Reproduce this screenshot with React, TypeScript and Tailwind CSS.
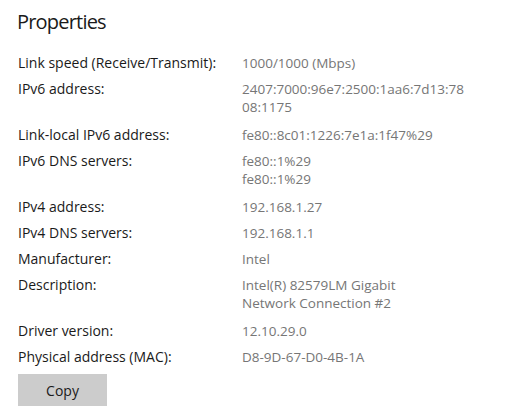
const rows: { label: string; value: string[] }[] = [
  { label: "Link speed (Receive/Transmit):", value: ["1000/1000 (Mbps)"] },
  { label: "IPv6 address:", value: ["2407:7000:96e7:2500:1aa6:7d13:78", "08:1175"] },
  { label: "Link-local IPv6 address:", value: ["fe80::8c01:1226:7e1a:1f47%29"] },
  { label: "IPv6 DNS servers:", value: ["fe80::1%29", "fe80::1%29"] },
  { label: "IPv4 address:", value: ["192.168.1.27"] },
  { label: "IPv4 DNS servers:", value: ["192.168.1.1"] },
  { label: "Manufacturer:", value: ["Intel"] },
  { label: "Description:", value: ["Intel(R) 82579LM Gigabit", "Network Connection #2"] },
  { label: "Driver version:", value: ["12.10.29.0"] },
  { label: "Physical address (MAC):", value: ["D8-9D-67-D0-4B-1A"] },
];

export default function App() {
  return (
    <div className="w-[512px] h-[418px] bg-white px-[18px] pt-[8px] font-['Open_Sans',sans-serif] overflow-hidden">
      <h1 className="text-[20px] leading-[28px] tracking-[-0.8px] text-[#1a1a1a] -ml-[1px]">
        Properties
      </h1>

      <div className="mt-[18px] flex flex-col gap-[8px]">
        {rows.map((row) => (
          <div
            key={row.label}
            className={`flex leading-[18px] ${row.value.length > 1 ? "pb-[2px]" : ""}`}
          >
            <div className="w-[224px] shrink-0 text-[14px] text-[#1a1a1a]">{row.label}</div>
            <div className="text-[13.5px] text-[#767676]">
              {row.value.map((v) => (
                <div key={v + row.label}>{v}</div>
              ))}
            </div>
          </div>
        ))}
      </div>

      <button className="mt-[8px] w-[89px] h-[32px] bg-[#cccccc] text-[14px] text-[#1a1a1a]">
        Copy
      </button>
    </div>
  );
}
